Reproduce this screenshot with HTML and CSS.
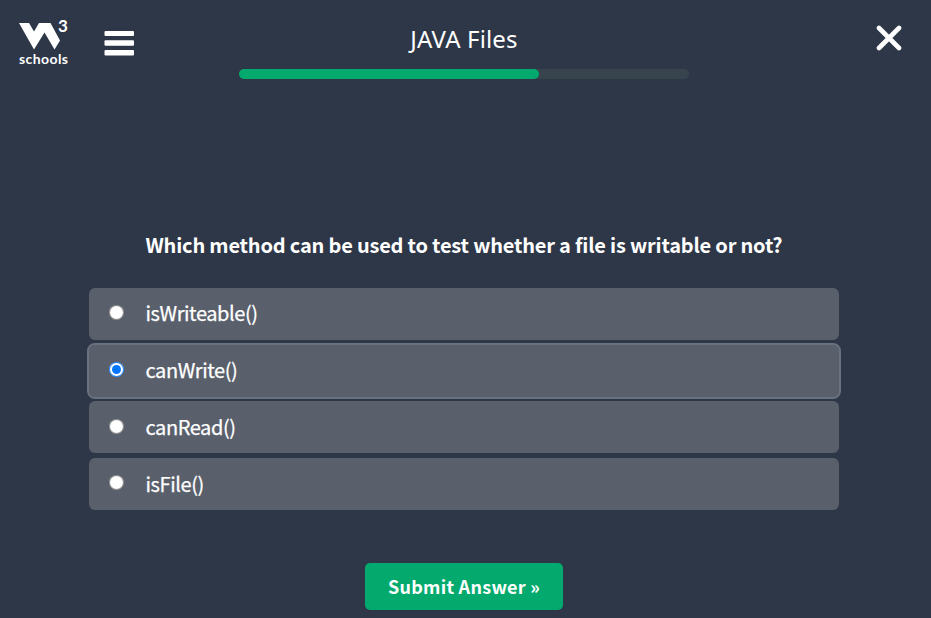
FILE: index.html
```html
<!DOCTYPE html>
<html lang="en">
<head>
<meta charset="utf-8">
<title>JAVA Files</title>
<link rel="stylesheet" href="styles.css">
</head>
<body>
<header class="topbar">
  <a class="logo" aria-label="W3Schools">
    <span class="logo-top">
      <svg class="logo-mark" width="42" height="27" viewBox="0 0 42 27"><path d="M0 0H10L15 8.5L20 0H31.5L41 17.5L35.5 26.5L25.5 9.5L15 26.5Z" fill="#fff"/></svg>
      <span class="logo-three">3</span>
    </span>
    <span class="logo-word">schools</span>
  </a>
  <svg class="menu" width="31" height="26" viewBox="0 0 31 26" fill="#fff"><rect x="0.5" y="1" width="29.5" height="5" rx="1"/><rect x="0.5" y="10.3" width="29.5" height="5.4" rx="1"/><rect x="0.5" y="20" width="29.5" height="5.5" rx="1"/></svg>
  <div class="heading">
    <h1 class="title">JAVA Files</h1>
    <div class="track"><div class="bar" style="width:66.67%"></div></div>
  </div>
  <svg class="close" width="26" height="26" viewBox="0 0 26 26" stroke="#fff" stroke-width="4.6" stroke-linecap="round"><path d="M3 3L23 23M23 3L3 23"/></svg>
</header>
<main class="quiz">
  <h2 class="question">Which method can be used to test whether a file is writable or not?</h2>
  <div class="options">
    <label class="option"><input type="radio" name="answer"><span>isWriteable()</span></label>
    <label class="option selected"><input type="radio" name="answer" checked><span>canWrite()</span></label>
    <label class="option"><input type="radio" name="answer"><span>canRead()</span></label>
    <label class="option"><input type="radio" name="answer"><span>isFile()</span></label>
  </div>
  <button class="submit" type="button">Submit Answer »</button>
</main>
</body>
</html>
```
FILE: styles.css
```css
* { box-sizing: border-box; }
body {
  margin: 0;
  height: 618px;
  overflow: hidden;
  background: #2e3748;
  color: #fff;
  font-family: "Noto Sans CJK SC", "Noto Sans", sans-serif;
}
.topbar { display: flex; height: 80px; align-items: flex-start; }
.logo { width: 50px; margin: 16px 0 0 19px; display: block; }
.logo-top { display: flex; height: 34px; }
.logo-mark { margin-top: 7px; flex: none; }
.logo-three { font: 700 17px/19px Lato, sans-serif; margin-left: -3px; }
.logo-word { display: block; font: 700 14px/18px Lato, sans-serif; letter-spacing: 0.4px; }
.menu { margin: 30px 0 0 35px; }
.heading { width: 450px; margin: 22px 0 0 104px; }
.title { margin: 0; text-align: center; font: 400 24px/34px "Noto Sans", sans-serif; letter-spacing: 0.15px; }
.track { margin-top: 13px; height: 10px; border-radius: 5px; background: #38444d; }
.bar { height: 100%; border-radius: 5px; background: #04aa6d; }
.close { margin: 25px 0 0 187px; }
.quiz { width: 750px; margin: 0 0 0 89px; padding-top: 150px; }
.question { margin: 0 0 43px 56.5px; font-size: 20px; line-height: 30px; font-weight: 700; height: 15px; white-space: nowrap; letter-spacing: -0.2px; }
.options { display: grid; gap: 4.95px; }
.option { display: flex; align-items: center; height: 51.8px; border-radius: 6px; background: #59606c; font-size: 20px; line-height: 30px; letter-spacing: -0.42px; }
.option span { margin-top: -1px; -webkit-text-stroke: 0.25px #fff; }
.option input { width: 15px; height: 15px; margin: -2.4px 21.5px 0 20px; }
.selected { outline: 2px solid #6b727f; }
.submit { display: block; width: 198px; height: 47px; margin: 53px auto 0; padding: 0; border: 0; border-radius: 5px; background: #04aa6d; color: #fff; font: 700 18px/47px "Noto Sans CJK SC", sans-serif; letter-spacing: 0.27px; }
```
